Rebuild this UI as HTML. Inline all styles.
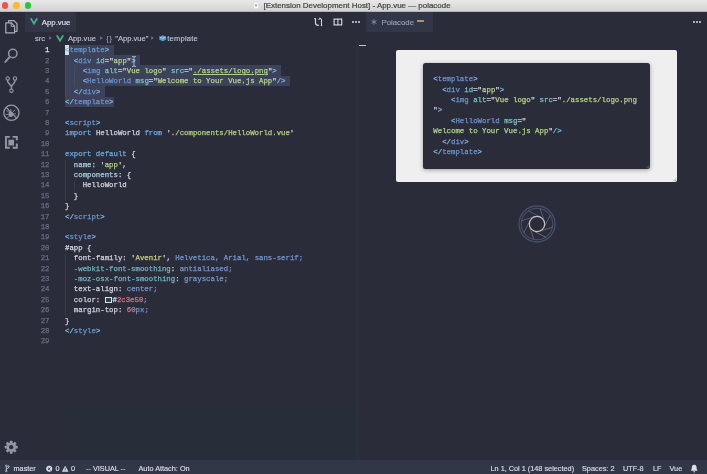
<!DOCTYPE html>
<html><head><meta charset="utf-8">
<style>
*{box-sizing:border-box;margin:0;padding:0}
html,body{width:707px;height:474px;overflow:hidden;background:#2a2c39;font-family:"Liberation Sans",sans-serif;}
.abs{position:absolute}
#title{left:0;top:0;width:707px;height:11.5px;background:linear-gradient(#e9e9e9,#d3d3d3);border-bottom:0.5px solid #b5b5b5}
#title .t{-webkit-text-stroke:.2px #404040;left:263.5px;top:1px;font-size:7.95px;color:#404040;white-space:nowrap}
.tl{width:6.700px;height:6.700px;border-radius:50%;top:1.950px}
#act{left:0;top:11.5px;width:25px;height:450px;background:#2a2c39}
#tabs{left:25px;top:11.5px;width:682px;height:20.5px;background:#2a2c39}
.tab{top:11.5px;height:20.5px;background:#313545}
.tabt{-webkit-text-stroke:.12px currentColor;font-size:7.8px;color:#e6e8f0;top:17.5px;white-space:nowrap}
.bc{-webkit-text-stroke:.12px currentColor;top:33.6px;font-size:7.6px;color:#c3c6d6;white-space:nowrap}
#status{left:0;top:460px;width:707px;height:14px;background:#323748}
.st{-webkit-text-stroke:.15px currentColor;top:463.9px;font-size:7.3px;color:#dddee6;white-space:nowrap}
pre{font-family:"Liberation Mono",monospace;font-size:7.35px;line-height:10.4px;white-space:pre;-webkit-text-stroke:0.25px currentColor;filter:blur(.35px)}
#code{left:65px;top:45.100px;color:#bfc7d5}
#ln{left:25px;top:45.100px;width:24.5px;text-align:right;color:#686d82}
.tg{color:#80b8e0}.tn{color:#6a94cc}.at{color:#78c0c4}.s{color:#b0d286}.k{color:#70a6d8}.w{color:#ced3e0}
.pk{color:#a4d0e0}.pr{color:#72b2c0}.v{color:#7296cc}.n{color:#cf7890}.y{color:#c8cf80}
.sel{background:#3c425a}
#panel{left:396.200px;top:50.400px;width:280.800px;height:131.500px;background:#efefef;border-radius:2px}
#inner{left:423px;top:63.200px;width:226.800px;height:105.600px;background:#2a2c39;border-radius:2.5px;box-shadow:0 1px 4px rgba(0,0,0,.35)}
#pcode{left:433.3px;top:74.2px;color:#bfc7d5;line-height:10.4px;font-size:7.38px}
#root{position:absolute;left:0;top:0;width:707px;height:474px;will-change:transform}
</style></head><body><div id="root">
<div id="title" class="abs">
 <div class="abs tl" style="left:1.750px;background:#fb4d4a"></div>
 <div class="abs tl" style="left:13.250px;background:#fcbc24"></div>
 <div class="abs tl" style="left:24.750px;background:#22c837"></div>
 <svg class="abs" style="left:253px;top:1.8px" width="6" height="7" viewBox="0 0 6 7"><path d="M0.3 0h4l1.4 1.4v5.4h-5.4z" fill="#fafafa" stroke="#bdbdbd" stroke-width=".4"/><path d="M1.5 2.6l1.5 2.4 1.5-2.4z" fill="#8faa5a"/></svg>
 <div class="abs t">[Extension Development Host] - App.vue — polacode</div>
</div>
<div id="act" class="abs"></div>
<div id="tabs" class="abs"></div>
<div class="abs tab" style="left:25px;width:51px"></div>
<div class="abs tab" style="left:366px;width:66.5px;background:#323748"></div>
<svg class="abs" style="left:29.5px;top:17.5px" width="8" height="7" viewBox="0 0 8 7"><path d="M0.800 0.400L4 5.600L7.200 0.400" fill="none" stroke="#3db883" stroke-width="1.800"/></svg>
<div class="abs tabt" style="left:41.8px">App.vue</div>
<div class="abs tabt" style="left:381.5px;color:#9aa0b8">Polacode</div>
<svg class="abs" style="left:370.500px;top:18.500px" width="6" height="6" viewBox="-3 -3 6 6" stroke="#8593b0" stroke-width=".8"><path d="M0 -2.700V2.700M-2.400 -1.400L2.400 1.400M-2.400 1.400L2.400 -1.400"/></svg>
<div class="abs" style="left:416.500px;top:20.400px;width:7.200px;height:1.600px;background:#b0935e;border-radius:.5px"></div>

<!-- editor actions -->
<svg class="abs" style="left:313px;top:16px" width="12" height="12" viewBox="313 16 12 12" fill="none" stroke="#d0d3e0" stroke-width="1.200" stroke-linecap="round" stroke-linejoin="round"><path d="M314.700 18.700h.8v4.200c0 1.700 1 2.400 3 2.400"/><path d="M318.900 19.500l.9-1.300 1.700 1.200v5" stroke-width="1.100"/><circle cx="321.500" cy="25.500" r=".75" fill="#d0d3e0" stroke="none"/></svg>
<svg class="abs" style="left:332.500px;top:18.300px" width="10" height="8" viewBox="0 0 10 8"><rect x="1.100" y="1.100" width="7.600" height="5.800" fill="none" stroke="#d0d3e0" stroke-width="1.200"/><path d="M4.900 1v6" stroke="#d0d3e0" stroke-width="1.100"/></svg>
<div class="abs" style="left:352.2px;top:21px;width:1.800px;height:1.800px;background:#d0d3e0;border-radius:50%;box-shadow:3px 0 #d0d3e0,6px 0 #d0d3e0"></div>
<div class="abs" style="left:693.2px;top:21px;width:1.800px;height:1.800px;background:#d0d3e0;border-radius:50%;box-shadow:3px 0 #d0d3e0,6px 0 #d0d3e0"></div>

<!-- breadcrumbs -->
<div class="abs bc" style="left:35px">src</div>
<svg class="abs" style="left:49.3px;top:36.4px" width="3" height="4" viewBox="0 0 3 4"><path d="M.3 .2L2.600 2L.3 3.800z" fill="#7d8298"/></svg>
<svg class="abs" style="left:56px;top:35.2px" width="8" height="7" viewBox="0 0 8 7"><path d="M0.800 0.400L4 5.600L7.200 0.400" fill="none" stroke="#3db883" stroke-width="1.800"/></svg>
<div class="abs bc" style="left:68px">App.vue</div>
<svg class="abs" style="left:99.8px;top:36.4px" width="3" height="4" viewBox="0 0 3 4"><path d="M.3 .2L2.600 2L.3 3.800z" fill="#7d8298"/></svg>
<div class="abs bc" style="left:106.300px;color:#9aa0b8;letter-spacing:.8px;font-size:7.200px;top:33.800px">{}</div>
<div class="abs bc" style="left:115.2px">"App.vue"</div>
<svg class="abs" style="left:151.3px;top:36.4px" width="3" height="4" viewBox="0 0 3 4"><path d="M.3 .2L2.600 2L.3 3.800z" fill="#7d8298"/></svg>
<svg class="abs" style="left:158.600px;top:35px" width="7.500" height="6.600" viewBox="0 0 8 7"><path d="M4 0.3L7.6 2v3L4 6.7 0.4 5V2z" fill="#4aa3e0"/><path d="M0.4 2L4 3.6 7.6 2" stroke="#cfe6f8" stroke-width=".7" fill="none"/></svg>
<div class="abs bc" style="left:167.300px;letter-spacing:.2px">template</div>

<!-- selection backgrounds -->
<div class="abs sel" style="left:65px;top:44.60px;width:48.5px;height:10.4px"></div>
<div class="abs sel" style="left:65px;top:55.00px;width:75.0px;height:10.4px"></div>
<div class="abs sel" style="left:65px;top:65.40px;width:216.1px;height:10.4px"></div>
<div class="abs sel" style="left:65px;top:75.80px;width:224.9px;height:10.4px"></div>
<div class="abs sel" style="left:65px;top:86.20px;width:39.7px;height:10.4px"></div>
<div class="abs sel" style="left:65px;top:96.60px;width:48.5px;height:10.4px"></div>
<div class="abs" style="left:65px;top:45px;width:4.2px;height:9.6px;background:#d8dce8"></div>


<div class="abs" style="left:65.200px;top:159.900px;width:.6px;height:41.600px;background:#363a4c"></div>
<div class="abs" style="left:74px;top:180.700px;width:.6px;height:10.400px;background:#363a4c"></div>
<div class="abs" style="left:65.200px;top:253.500px;width:.6px;height:62.400px;background:#363a4c"></div>
<div class="abs" style="left:65.200px;top:55px;width:.6px;height:41.600px;background:#464c66"></div>
<div class="abs" style="left:74px;top:65.400px;width:.6px;height:20.800px;background:#464c66"></div>
<pre id="ln" class="abs"><span style="color:#e0e3ee">1</span>
2
3
4
5
6
7
8
9
10
11
12
13
14
15
16
17
18
19
20
21
22
23
24
25
26
27
28
29</pre>
<pre id="code" class="abs"><span class="tg">&lt;</span><span class="tn">template</span><span class="tg">&gt;</span>
  <span class="tg">&lt;</span><span class="tn">div</span> <span class="at">id</span><span class="w">="</span><span class="s">app</span><span class="w">"</span><span class="tg">&gt;</span>
    <span class="tg">&lt;</span><span class="tn">img</span> <span class="at">alt</span><span class="w">="</span><span class="s">Vue logo</span><span class="w">"</span> <span class="at">src</span><span class="w">="</span><span class="s" style="text-decoration:underline">./assets/logo.png</span><span class="w">"</span><span class="tg">&gt;</span>
    <span class="tg">&lt;</span><span class="tn">HelloWorld</span> <span class="at">msg</span><span class="w">="</span><span class="s">Welcome to Your Vue.js App</span><span class="w">"</span><span class="tg">/&gt;</span>
  <span class="tg">&lt;/</span><span class="tn">div</span><span class="tg">&gt;</span>
<span class="tg">&lt;/</span><span class="tn">template</span><span class="tg">&gt;</span>

<span class="tg">&lt;</span><span class="tn">script</span><span class="tg">&gt;</span>
<span class="k">import</span> <span class="w">HelloWorld</span> <span class="k">from</span> <span class="w">'</span><span class="s">./components/HelloWorld.vue</span><span class="w">'</span>

<span class="k">export default</span> <span class="w">{</span>
  <span class="pk">name</span><span class="w">: '</span><span class="s">app</span><span class="w">',</span>
  <span class="pk">components</span><span class="w">: {</span>
    <span class="w">HelloWorld</span>
  <span class="w">}</span>
<span class="w">}</span>
<span class="tg">&lt;/</span><span class="tn">script</span><span class="tg">&gt;</span>

<span class="tg">&lt;</span><span class="tn">style</span><span class="tg">&gt;</span>
<span class="w">#app {</span>
  <span class="w">font-family: '</span><span class="y">Avenir</span><span class="w">',</span> <span class="v">Helvetica</span><span class="v">,</span> <span class="v">Arial</span><span class="v">,</span> <span class="v">sans-serif</span><span class="v">;</span>
  <span class="pr">-webkit-font-smoothing</span><span class="w">:</span> <span class="v">antialiased</span><span class="v">;</span>
  <span class="pr">-moz-osx-font-smoothing</span><span class="w">:</span> <span class="v">grayscale</span><span class="v">;</span>
  <span class="w">text-align:</span> <span class="v">center</span><span class="v">;</span>
  <span class="w">color: </span><span style="display:inline-block;width:6.300px;height:6.200px;border:.8px solid #dfe2ec;background:#2c3e50;vertical-align:-1.100px;margin:0 .9px 0 .6px"></span><span class="w">#</span><span class="n">2c3e50</span><span class="v">;</span>
  <span class="w">margin-top:</span> <span class="n">60</span><span class="v">px</span><span class="v">;</span>
<span class="w">}</span>
<span class="tg">&lt;/</span><span class="tn">style</span><span class="tg">&gt;</span>
</pre>

<!-- right panel -->
<div class="abs" style="left:358px;top:44.5px;width:7.5px;height:1px;background:#c0c4d4"></div>
<div id="panel" class="abs"></div>
<div id="inner" class="abs"></div>
<pre id="pcode" class="abs"><span class="tg">&lt;</span><span class="tn">template</span><span class="tg">&gt;</span>
  <span class="tg">&lt;</span><span class="tn">div</span> <span class="at">id</span><span class="w">="</span><span class="s">app</span><span class="w">"</span><span class="tg">&gt;</span>
    <span class="tg">&lt;</span><span class="tn">img</span> <span class="at">alt</span><span class="w">="</span><span class="s">Vue logo</span><span class="w">"</span> <span class="at">src</span><span class="w">="</span><span class="s">./assets/logo.png</span>
<span class="w">"</span><span class="tg">&gt;</span>
    <span class="tg">&lt;</span><span class="tn">HelloWorld</span> <span class="at">msg</span><span class="w">="</span>
<span class="s">Welcome to Your Vue.js App</span><span class="w">"</span><span class="tg">/&gt;</span>
  <span class="tg">&lt;/</span><span class="tn">div</span><span class="tg">&gt;</span>
<span class="tg">&lt;/</span><span class="tn">template</span><span class="tg">&gt;</span></pre>


<svg class="abs" style="left:645px;top:164px" width="5" height="5" viewBox="0 0 5 5"><path d="M4.300 1.200L1.200 4.300M4.300 2.800L2.800 4.300" stroke="#70758c" stroke-width=".6"/></svg>
<svg class="abs" style="left:672px;top:177px" width="5" height="5" viewBox="0 0 5 5"><path d="M4.300 1.200L1.200 4.300M4.300 2.800L2.800 4.300" stroke="#8a8a8a" stroke-width=".6"/></svg>
<!-- shutter logo -->
<svg class="abs" style="left:517px;top:204px" width="40" height="40" viewBox="-20 -20 40 40" fill="none">
 <circle r="18" stroke="#464e6a" stroke-width="1.3"/>
 <circle r="15.700" stroke="#454c68" stroke-width="1.2"/>
 <g stroke-width="1" opacity=".75"><path d="M6.95 3.54L13.19 -8.70" stroke="#6f7488"/><path d="M2.41 7.42L15.48 3.17" stroke="#7a7680"/><path d="M-3.54 6.95L8.70 13.19" stroke="#8a8078"/><path d="M-7.42 2.41L-3.17 15.48" stroke="#7d7478"/><path d="M-6.95 -3.54L-13.19 8.70" stroke="#6c6f84"/><path d="M-2.41 -7.42L-15.48 -3.17" stroke="#5f6680"/><path d="M3.54 -6.95L-8.70 -13.19" stroke="#596280"/><path d="M7.42 -2.41L3.17 -15.48" stroke="#656c88"/></g>
 <circle r="7.700" fill="#2a2c39" stroke="#c4c5cc" stroke-width="1.2"/>
</svg>

<div class="abs" style="left:64px;top:404px;width:296px;height:56px;background:#272d39"></div>
<div class="abs" style="left:355px;top:40px;width:4px;height:420px;background:#2b2e3b"></div>
<div id="status" class="abs"></div>
<!-- activity icons -->
<svg class="abs" style="left:0;top:11.5px" width="25" height="450" viewBox="0 11.5 25 450" fill="none" stroke="#9296a9" stroke-linecap="round" stroke-linejoin="round">
 <!-- files -->
 <g stroke="#a9acbd" stroke-width="1.200">
  <path d="M8.6 21.6v-1.4h5.4l3 3v7.6h-1.8"/>
  <path d="M5.8 22.4h5.6l3.2 3.2v6.8h-8.8z"/>
  <path d="M11.2 22.6v3.2h3.2" stroke-width="1"/>
 </g>
 <!-- search -->
 <g stroke-width="1.5"><circle cx="12.8" cy="53" r="4.2"/><path d="M9.8 56.4L5.3 61.4" stroke-width="1.9"/></g>
 <!-- git -->
 <g stroke-width="1.1"><circle cx="7.7" cy="78" r="1.7"/><circle cx="15" cy="78" r="1.7"/><circle cx="11.4" cy="90.2" r="1.7"/>
  <path d="M7.7 79.8v1.4L11.4 86v2.4M15 79.8v1.4L11.4 86" stroke-width="1.4"/></g>
 <!-- debug -->
 <g stroke-width="1.3"><circle cx="11.4" cy="112.3" r="7.6"/><path d="M6.2 106.9L16.6 117.7" stroke-width="1.2"/>
  <ellipse cx="10.8" cy="113.6" rx="2.3" ry="2.9" fill="#9296a9" stroke="none"/>
  <path d="M8.6 111.4l-1.8-1.2M8.2 113.8h-2.2M8.8 116l-1.6 1.4M13 111.2l1.8-1.4M13.4 113.4h2.2M10.8 110.6v-1.6" stroke-width=".8"/></g>
 <!-- extensions -->
 <g stroke-width="1.9" stroke-linecap="butt" stroke-linejoin="miter"><path d="M9.8 136.4h-3.8v10.800h3.800M12.600 136.400h4.200v3.400M16.800 143v4.200h-4.200"/>
  <rect x="8.400" y="139.200" width="5.600" height="5.800" fill="#9296a9" stroke="none"/></g>
</svg>
<!-- gear -->
<svg class="abs" style="left:4.100px;top:439.600px" width="14.400" height="14.400" viewBox="-7 -7 14 14">
 <g fill="#9296a9"><circle r="4.6"/>
 <rect x="-1.3" y="-6.3" width="2.6" height="12.6" rx=".5" transform="rotate(0)"/>
 <rect x="-1.3" y="-6.3" width="2.6" height="12.6" rx=".5" transform="rotate(45)"/>
 <rect x="-1.3" y="-6.3" width="2.6" height="12.6" rx=".5" transform="rotate(90)"/>
 <rect x="-1.3" y="-6.3" width="2.6" height="12.6" rx=".5" transform="rotate(135)"/>
</g>
 <circle r="2.1" fill="#2a2c39"/>
</svg>
<!-- status icons -->
<svg class="abs" style="left:0;top:460.5px" width="707" height="13.5" viewBox="0 460.5 707 13.5" fill="none" stroke="#dddee6">
 <g stroke-width=".75"><circle cx="6.300" cy="465.200" r=".7"/><circle cx="8.500" cy="466.100" r=".7"/><circle cx="6.300" cy="470.600" r=".7"/><path d="M6.300 465.900v4M8.500 466.800c0 1.500-2.200 1-2.200 2.400"/></g>
 <circle cx="49.2" cy="468.3" r="3" fill="#dddee6" stroke="none"/><path d="M47.9 467l2.6 2.6M50.5 467l-2.6 2.6" stroke="#30344a" stroke-width=".9"/>
 <path d="M65.2 465.2l3.3 6h-6.6z" fill="#dddee6" stroke="none"/><path d="M65.2 467.2v2.2M65.2 470v.6" stroke="#30344a" stroke-width=".8"/>
 <path d="M694.2 464.2c-2.2 0-2.4 2-2.4 3.6 0 1.200-.8 1.800-1 2.400h6.800c-.2-.6-1-1.200-1-2.400 0-1.600-.2-3.600-2.400-3.600z" fill="#dddee6" stroke="none"/><circle cx="694.2" cy="471.200" r=".8" fill="#dddee6" stroke="none"/>
</svg>
<!-- I-beam -->
<svg class="abs" style="left:130.900px;top:55.600px" width="6" height="11" viewBox="0 0 6 11" fill="none" stroke="#d4d7e2" stroke-width=".8"><path d="M1 .6h1.400c.4 0 .6.300.6.600v8.600c0 .3-.2.600-.6.600h-1.400M5 .6h-1.400c-.4 0-.6.300-.6.600M5 10.400h-1.400c-.4 0-.6-.3-.6-.6"/></svg>

<div class="abs st" style="left:13.5px">master</div>
<div class="abs st" style="left:55.5px">0</div>
<div class="abs st" style="left:71px">0</div>
<div class="abs st" style="left:86px">-- VISUAL --</div>
<div class="abs st" style="left:138.5px">Auto Attach: On</div>
<div class="abs st" style="left:490.5px">Ln 1, Col 1 (148 selected)</div>
<div class="abs st" style="left:582px">Spaces: 2</div>
<div class="abs st" style="left:623px">UTF-8</div>
<div class="abs st" style="left:653px">LF</div>
<div class="abs st" style="left:669.5px">Vue</div>
</div></body></html>
